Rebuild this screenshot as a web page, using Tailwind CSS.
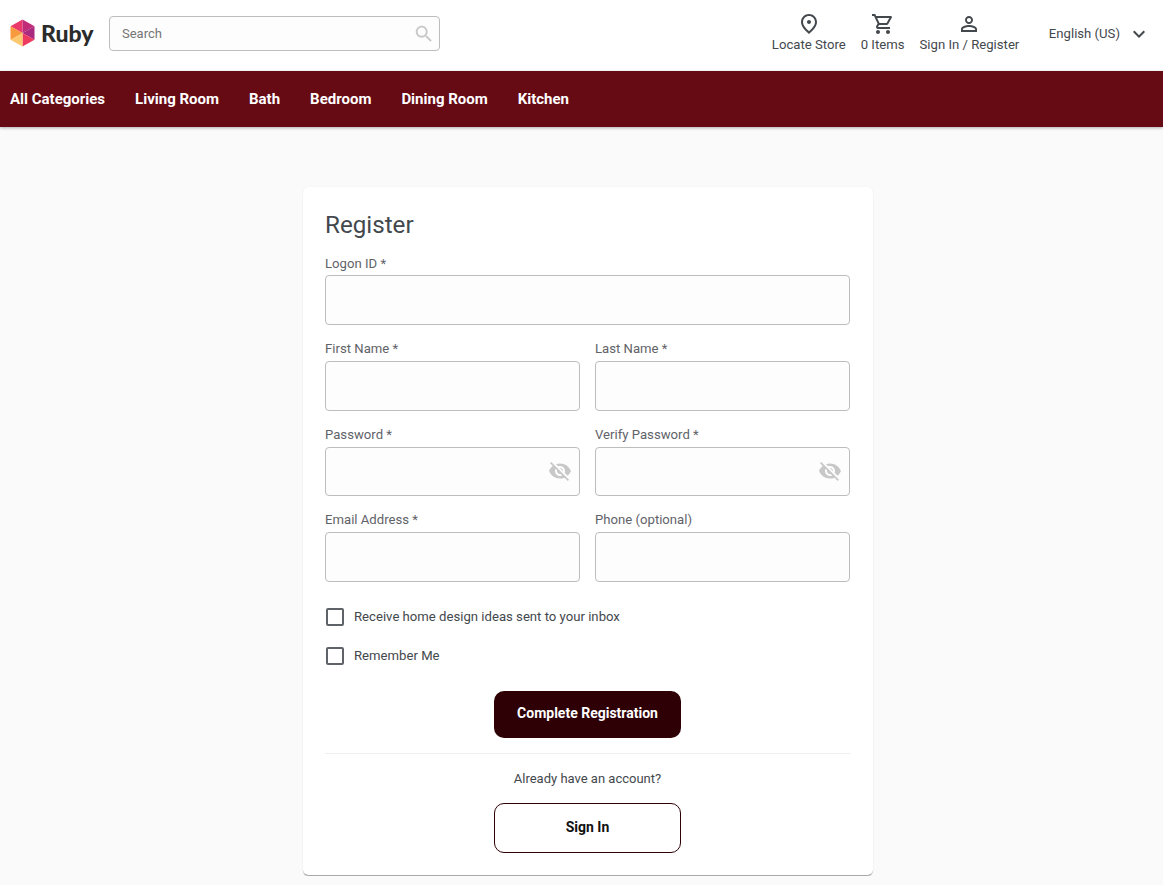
<!DOCTYPE html>
<html lang="en">
<head>
<meta charset="utf-8">
<title>Ruby - Register</title>
<script src="https://cdn.jsdelivr.net/npm/@tailwindcss/browser@4"></script>
</head>
<body class="bg-[#fafafa] font-['Roboto',sans-serif] text-[#43484d]">
<header class="bg-white h-[71px] flex items-center pl-[10px] pr-[12px] pb-[4px]">
  <a class="flex items-center w-[99px] shrink-0 mb-[1px]">
    <svg width="25" height="28" viewBox="0 0 25 28" class="shrink-0">
      <polygon points="12.5,0.5 12.5,14 0.5,7.2" fill="#ea3a6c"/>
      <polygon points="12.5,0.5 24.5,7.2 12.5,14" fill="#c02c78"/>
      <polygon points="24.5,7.2 24.5,20.8 12.5,14" fill="#aa2a80"/>
      <polygon points="24.5,20.8 12.5,27.5 12.5,14" fill="#ee3a5e"/>
      <polygon points="12.5,27.5 0.5,20.8 12.5,14" fill="#fdc870"/>
      <polygon points="0.5,20.8 0.5,7.2 12.5,14" fill="#f79a3e"/>
    </svg>
    <span class="ml-[6px] font-['Lato',sans-serif] font-black text-[23px] leading-none text-[#2b2b2b]">Ruby</span>
  </a>
  <div class="w-[331px] h-[35px] border border-[#bdbdbd] rounded-[4px] bg-[#fdfdfd] flex items-center justify-between pl-[12px] pr-[4px]">
    <span class="text-[13px] text-[#757575]">Search</span>
    <svg width="22" height="22" viewBox="0 0 24 24" fill="#c8c8c8"><path d="M15.5 14h-.79l-.28-.27C15.41 12.59 16 11.11 16 9.5 16 5.91 13.09 3 9.5 3S3 5.91 3 9.5 5.91 16 9.5 16c1.61 0 3.09-.59 4.23-1.57l.27.28v.79l5 4.99L20.49 19l-4.99-5zm-6 0C7.01 14 5 11.99 5 9.5S7.01 5 9.5 5 14 7.01 14 9.5 11.99 14 9.5 14z"/></svg>
  </div>
  <div class="ml-auto flex items-center">
    <div class="flex gap-[15px] text-[13.15px] leading-[15px] mr-[29.5px] mb-[4px]">
      <a class="flex flex-col items-center gap-[1px]">
        <svg width="24" height="24" viewBox="0 0 24 24" fill="#43484d"><path d="M12 12c-1.1 0-2-.9-2-2s.9-2 2-2 2 .9 2 2-.9 2-2 2zm6-1.8C18 6.57 15.35 4 12 4s-6 2.57-6 6.2c0 2.34 1.95 5.44 6 9.14 4.05-3.7 6-6.8 6-9.14zM12 2c4.2 0 8 3.22 8 8.2 0 3.32-2.67 7.25-8 11.8-5.33-4.55-8-8.48-8-11.8C4 5.22 7.8 2 12 2z"/></svg>
        <span>Locate Store</span>
      </a>
      <a class="flex flex-col items-center gap-[1px]">
        <svg width="24" height="24" viewBox="0 0 24 24" fill="#43484d"><path d="M15.55 13c.75 0 1.41-.41 1.75-1.03l3.58-6.49c.37-.66-.11-1.48-.87-1.48H5.21l-.94-2H1v2h2l3.6 7.59-1.35 2.44C4.52 15.37 5.48 17 7 17h12v-2H7l1.1-2h7.45zM6.16 6h12.15l-2.76 5H8.53L6.16 6zM7 18c-1.1 0-1.99.9-1.99 2S5.9 22 7 22s2-.9 2-2-.9-2-2-2zm10 0c-1.1 0-1.99.9-1.99 2s.89 2 1.99 2 2-.9 2-2-.9-2-2-2z"/></svg>
        <span>0 Items</span>
      </a>
      <a class="flex flex-col items-center gap-[1px]">
        <svg width="24" height="24" viewBox="0 0 24 24" fill="#43484d"><path d="M12 5.9c1.16 0 2.1.94 2.1 2.1s-.94 2.1-2.1 2.1S9.9 9.16 9.9 8s.94-2.1 2.1-2.1m0 9c2.97 0 6.1 1.46 6.1 2.1v1.1H5.9V17c0-.64 3.13-2.1 6.1-2.1M12 4C9.79 4 8 5.79 8 8s1.79 4 4 4 4-1.79 4-4-1.79-4-4-4zm0 9c-2.67 0-8 1.34-8 4v3h16v-3c0-2.66-5.33-4-8-4z"/></svg>
        <span>Sign In / Register</span>
      </a>
    </div>
    <span class="text-[13.15px]">English (US)</span>
    <svg width="24" height="24" viewBox="0 0 24 24" fill="#43484d" class="ml-[7px]"><path d="M7.41 8.59 12 13.17l4.59-4.58L18 10l-6 6-6-6z"/></svg>
  </div>
</header>
<nav class="bg-[#660a14] h-[56px] pl-[10px] flex items-center gap-[30px] text-white font-bold text-[15px] shadow-[0_1px_3px_rgba(0,0,0,0.3)]">
  <a>All Categories</a><a>Living Room</a><a>Bath</a><a>Bedroom</a><a>Dining Room</a><a>Kitchen</a>
</nav>
<main class="pt-[60px] pl-[13px] flex justify-center">
  <section class="w-[570px] h-[689px] bg-white rounded-[6px] border-b border-[#a8a8a8] shadow-[0_1px_1px_rgba(0,0,0,0.12),0_0_2px_rgba(0,0,0,0.05)] pl-[22px] pr-[23px] pt-[23px]">
    <h1 class="text-[24.2px] leading-[30px] font-normal text-[#43484d]">Register</h1>
    <div class="mt-[13.4px] grid grid-cols-2 gap-x-[15px] gap-y-[14px] text-[13.15px] text-[#5f6368]">
      <label class="col-span-2 block">
        <span class="block h-[22px] leading-[21px]">Logon ID *</span>
        <span class="block h-[49.6px] border border-[#bdbdbd] rounded-[4px] bg-[#fdfdfd]"></span>
      </label>
      <label class="block">
        <span class="block h-[22px] leading-[20px]">First Name *</span>
        <span class="block h-[49.6px] border border-[#bdbdbd] rounded-[4px] bg-[#fdfdfd]"></span>
      </label>
      <label class="block">
        <span class="block h-[22px] leading-[20px]">Last Name *</span>
        <span class="block h-[49.6px] border border-[#bdbdbd] rounded-[4px] bg-[#fdfdfd]"></span>
      </label>
      <label class="block">
        <span class="block h-[22px] leading-[20px]">Password *</span>
        <span class="flex items-center justify-end pr-[7px] h-[49.6px] border border-[#bdbdbd] rounded-[4px] bg-[#fdfdfd]">
          <svg width="24" height="24" viewBox="0 0 24 24" fill="#c8c8c8"><path d="M12 7c2.76 0 5 2.24 5 5 0 .65-.13 1.26-.36 1.83l2.92 2.92c1.51-1.26 2.7-2.89 3.43-4.75-1.73-4.39-6-7.5-11-7.5-1.4 0-2.74.25-3.98.7l2.16 2.16C10.74 7.13 11.35 7 12 7zM2 4.27l2.28 2.28.46.46C3.08 8.3 1.78 10.02 1 12c1.73 4.39 6 7.5 11 7.5 1.55 0 3.03-.3 4.38-.84l.42.42L19.73 22 21 20.73 3.27 3 2 4.27zM7.53 9.8l1.55 1.55c-.05.21-.08.43-.08.65 0 1.66 1.34 3 3 3 .22 0 .44-.03.65-.08l1.55 1.55c-.67.33-1.41.53-2.2.53-2.76 0-5-2.24-5-5 0-.79.2-1.53.53-2.2zm4.31-.78l3.15 3.15.02-.16c0-1.66-1.34-3-3-3l-.17.01z"/></svg>
        </span>
      </label>
      <label class="block">
        <span class="block h-[22px] leading-[20px]">Verify Password *</span>
        <span class="flex items-center justify-end pr-[7px] h-[49.6px] border border-[#bdbdbd] rounded-[4px] bg-[#fdfdfd]">
          <svg width="24" height="24" viewBox="0 0 24 24" fill="#c8c8c8"><path d="M12 7c2.76 0 5 2.24 5 5 0 .65-.13 1.26-.36 1.83l2.92 2.92c1.51-1.26 2.7-2.89 3.43-4.75-1.73-4.39-6-7.5-11-7.5-1.4 0-2.74.25-3.98.7l2.16 2.16C10.74 7.13 11.35 7 12 7zM2 4.27l2.28 2.28.46.46C3.08 8.3 1.78 10.02 1 12c1.73 4.39 6 7.5 11 7.5 1.55 0 3.03-.3 4.38-.84l.42.42L19.73 22 21 20.73 3.27 3 2 4.27zM7.53 9.8l1.55 1.55c-.05.21-.08.43-.08.65 0 1.66 1.34 3 3 3 .22 0 .44-.03.65-.08l1.55 1.55c-.67.33-1.41.53-2.2.53-2.76 0-5-2.24-5-5 0-.79.2-1.53.53-2.2zm4.31-.78l3.15 3.15.02-.16c0-1.66-1.34-3-3-3l-.17.01z"/></svg>
        </span>
      </label>
      <label class="block">
        <span class="block h-[22px] leading-[20px]">Email Address *</span>
        <span class="block h-[49.6px] border border-[#bdbdbd] rounded-[4px] bg-[#fdfdfd]"></span>
      </label>
      <label class="block">
        <span class="block h-[22px] leading-[20px]">Phone (optional)</span>
        <span class="block h-[49.6px] border border-[#bdbdbd] rounded-[4px] bg-[#fdfdfd]"></span>
      </label>
    </div>
    <div class="mt-[26.2px] flex flex-col gap-[21px] text-[13.15px]">
      <label class="flex items-center h-[18px] pl-[1px]"><span class="w-[17.5px] h-[17.5px] border-2 border-[#5f6368] rounded-[2px] shrink-0"></span><span class="ml-[10.5px]">Receive home design ideas sent to your inbox</span></label>
      <label class="flex items-center h-[18px] pl-[1px]"><span class="w-[17.5px] h-[17.5px] border-2 border-[#5f6368] rounded-[2px] shrink-0"></span><span class="ml-[10.5px]">Remember Me</span></label>
    </div>
    <div class="mt-[26px] flex justify-center">
      <button class="w-[187px] h-[47px] pb-[1px] bg-[#2e0006] rounded-[10px] text-white font-bold text-[14px]">Complete Registration</button>
    </div>
    <div class="mt-[15px] border-t border-[#eeeeee] pt-[15px] flex flex-col items-center">
      <p class="text-[13px] leading-[20px]">Already have an account?</p>
      <button class="mt-[14px] w-[187px] h-[50px] border border-[#2e0006] rounded-[10px] bg-white text-[#111] font-bold text-[14px]">Sign In</button>
    </div>
  </section>
</main>
</body>
</html>
